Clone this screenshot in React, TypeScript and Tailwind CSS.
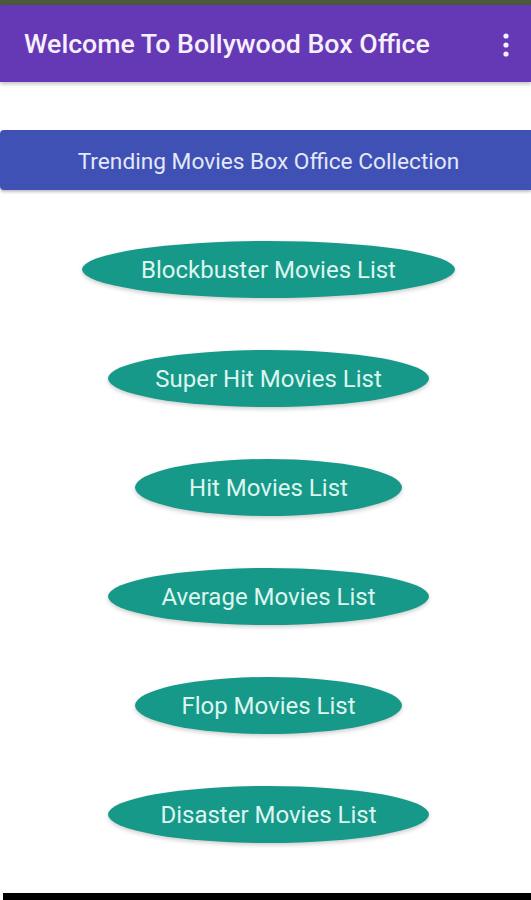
const buttons = [
  { label: "Blockbuster Movies List", width: "w-[373px]" },
  { label: "Super Hit Movies List", width: "w-[321px]" },
  { label: "Hit Movies List", width: "w-[267px]" },
  { label: "Average Movies List", width: "w-[321px]" },
  { label: "Flop Movies List", width: "w-[267px]" },
  { label: "Disaster Movies List", width: "w-[321px]" },
];

export default function App() {
  return (
    <div className="flex h-[900px] w-[531px] flex-col overflow-hidden bg-white font-['Roboto',sans-serif]">
      {/* status bar */}
      <div className="h-[5px] bg-[#4b5a3c]" />

      {/* app bar */}
      <header className="relative z-10 flex h-[77px] items-center justify-between bg-[#6539b6] pl-6 pr-[22px] pt-[2px] shadow-[0_2px_4px_rgba(0,0,0,0.25)]">
        <h1 className="text-[26.7px] font-medium text-[#f6f0fc]">
          Welcome To Bollywood Box Office
        </h1>
        <MoreIcon />
      </header>

      <div className="mt-[48px] flex h-[60px] items-center justify-center rounded-l-[4px] bg-[#3f51b5] pt-[4px] pl-[6px] shadow-[0_2px_3px_rgba(0,0,0,0.25)]">
        <span className="text-[22.7px] text-[#e4e8f8]">
          Trending Movies Box Office Collection
        </span>
      </div>

      <div className="mt-[51px] flex flex-col items-center gap-[52px] pl-[6px]">
        {buttons.map((b) => (
          <button
            key={b.label}
            type="button"
            className={`flex h-[57px] ${b.width} items-center justify-center rounded-[50%] bg-[#17998a] text-[24px] text-[#dcf6ef] shadow-[0_2px_4px_rgba(0,0,0,0.2)]`}
          >
            {b.label}
          </button>
        ))}
      </div>

      <div className="mt-auto ml-[3px] h-[7px] bg-black" />
    </div>
  );
}

function MoreIcon() {
  return (
    <svg width="6" height="24" viewBox="0 0 6 24" aria-hidden="true">
      <circle cx="3" cy="3" r="2.6" fill="#f3eefc" />
      <circle cx="3" cy="12" r="2.6" fill="#f3eefc" />
      <circle cx="3" cy="21" r="2.6" fill="#f3eefc" />
    </svg>
  );
}
